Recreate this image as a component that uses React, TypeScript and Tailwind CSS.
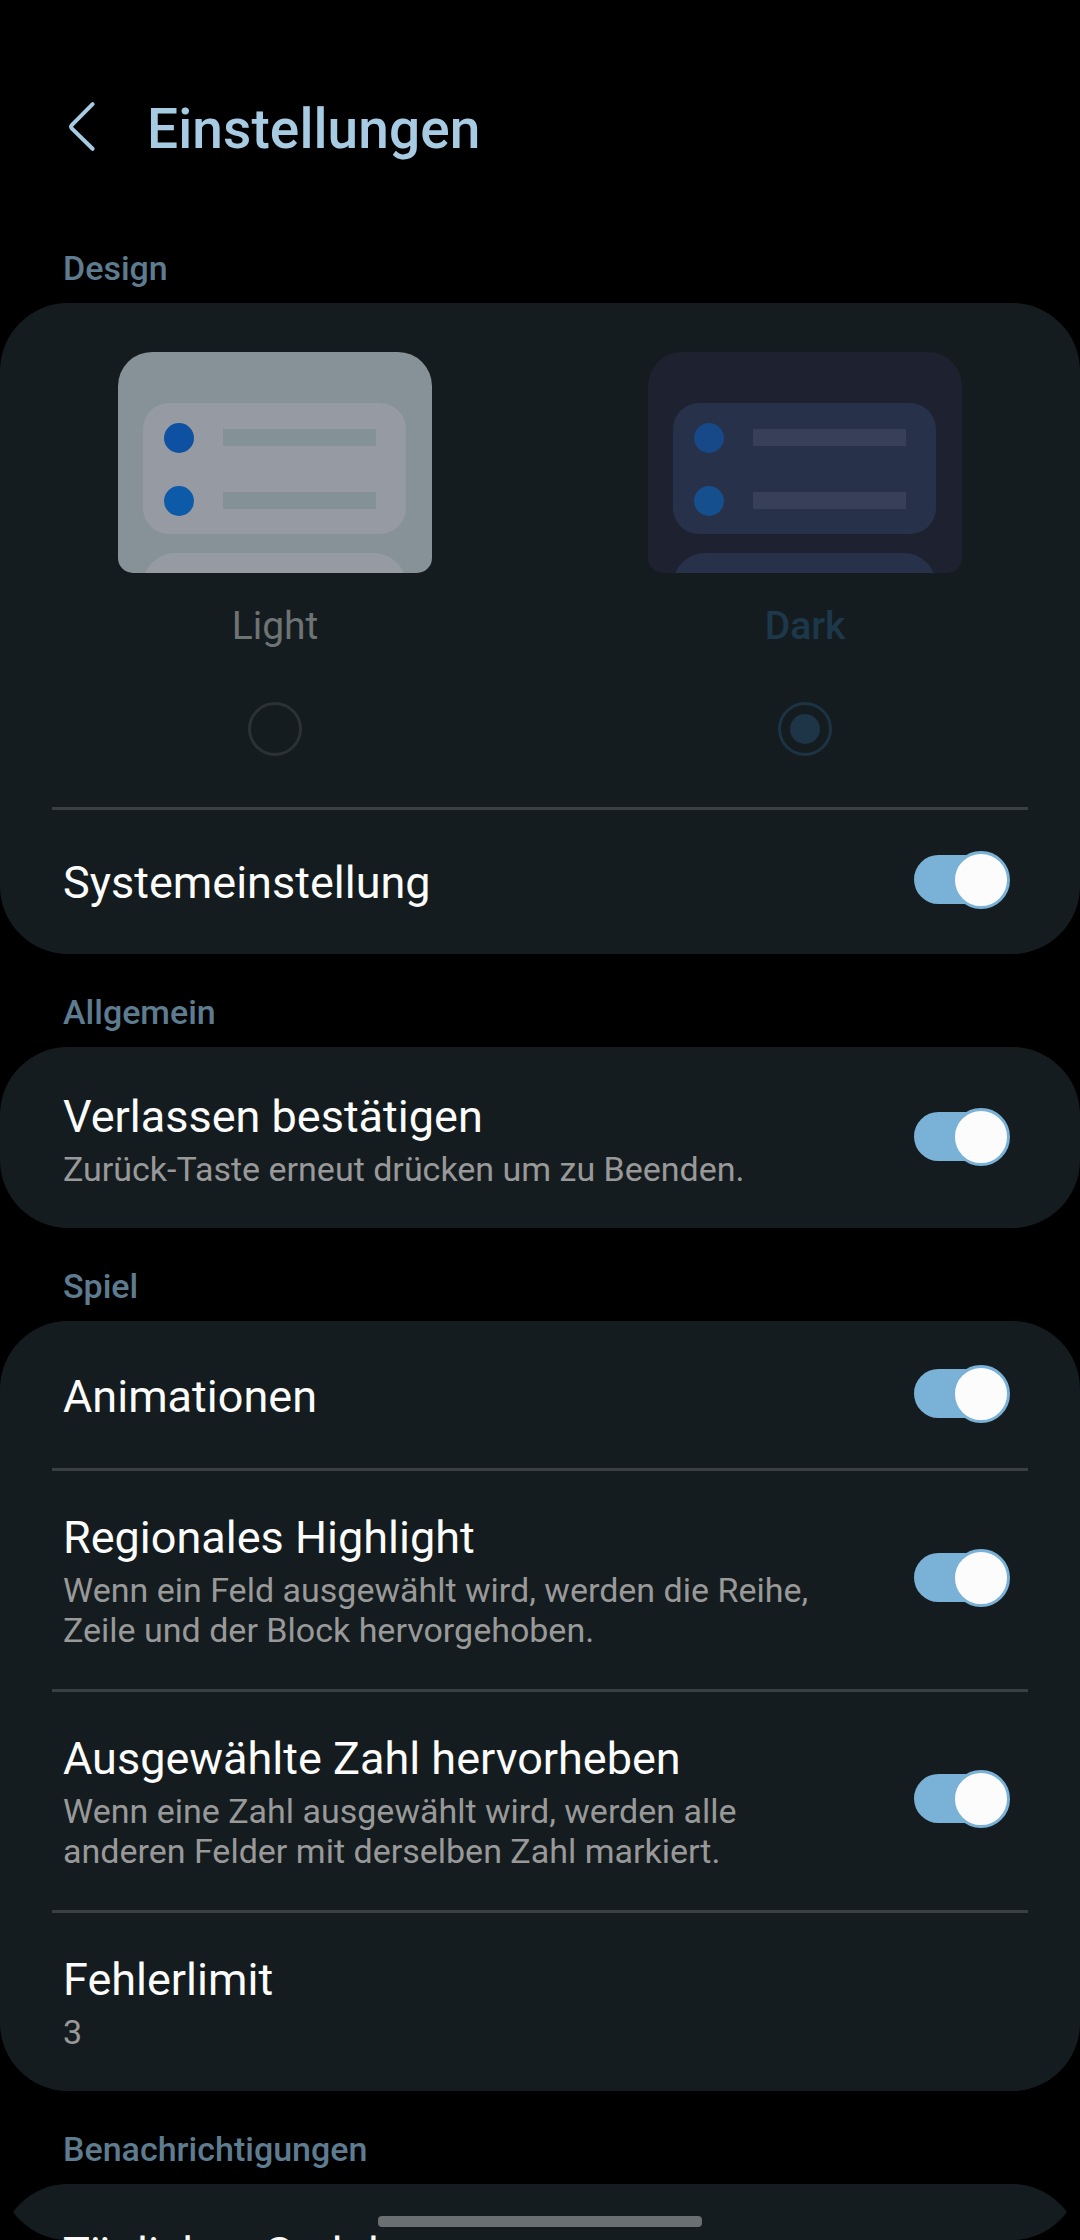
import type { ReactNode } from "react";

type PreviewColors = {
  frame: string;
  card: string;
  bar: string;
  dotTop: string;
  dotBottom: string;
};

const lightPreview: PreviewColors = {
  frame: "bg-[#869297]",
  card: "bg-[#969ba3]",
  bar: "bg-[#849196]",
  dotTop: "bg-[#0e50a1]",
  dotBottom: "bg-[#0c5aa8]",
};

const darkPreview: PreviewColors = {
  frame: "bg-[#1e2130]",
  card: "bg-[#27314a]",
  bar: "bg-[#384059]",
  dotTop: "bg-[#174888]",
  dotBottom: "bg-[#164f8d]",
};

function PreviewLine({ dot, bar }: { dot: string; bar: string }) {
  return (
    <div className="flex h-[31px] items-center gap-[29px]">
      <div className={`size-[30px] rounded-full ${dot}`} />
      <div className={`h-[17px] w-[153px] ${bar}`} />
    </div>
  );
}

function Preview({ colors }: { colors: PreviewColors }) {
  return (
    <div
      className={`flex h-[221px] w-[314px] flex-col overflow-hidden rounded-t-[34px] rounded-b-[15px] pt-[51px] pl-[25px] ${colors.frame}`}
    >
      <div className={`flex h-[131px] w-[263px] shrink-0 flex-col gap-[32px] rounded-[26px] pt-[19px] pl-[21px] ${colors.card}`}>
        <PreviewLine dot={colors.dotTop} bar={colors.bar} />
        <PreviewLine dot={colors.dotBottom} bar={colors.bar} />
      </div>
      <div className={`mt-[19px] h-[80px] w-[263px] shrink-0 rounded-[32px] ${colors.card}`} />
    </div>
  );
}

function ThemeOption({ label, colors, selected }: { label: string; colors: PreviewColors; selected?: boolean }) {
  return (
    <div className="flex flex-1 flex-col items-center">
      <Preview colors={colors} />
      <span
        className={`mt-[30px] text-[39px] leading-[46px] ${selected ? "font-medium text-[#1c384a]" : "text-[#6e7374]"}`}
      >
        {label}
      </span>
      <div
        className={`mt-[53px] flex size-[54px] items-center justify-center rounded-full border-[3px] ${selected ? "border-[#1c3344]" : "border-[#2b3134]"}`}
      >
        {selected && <div className="size-[30px] rounded-full bg-[#1d3546]" />}
      </div>
    </div>
  );
}

function Toggle() {
  return (
    <div className="mb-px flex h-[58px] w-[96px] shrink-0 items-start self-center">
      <div className="mt-[4px] h-[49px] w-[93px] rounded-full bg-[#7ab1d6]" />
      <div className="-ml-[55px] size-[58px] shrink-0 rounded-full border-[3px] border-[#7ab1d6] bg-[#fcfcfc]" />
    </div>
  );
}

function Row({
  title,
  subtitle,
  toggle,
  divider,
}: {
  title: string;
  subtitle?: string;
  toggle?: boolean;
  divider?: boolean;
}) {
  return (
    <div>
      {divider && <div className="mx-[52px] -mb-[3px] h-[3px] bg-[#3a3f42]" />}
      <div className="flex justify-between pr-[70px] pl-[63px]">
        <div className={subtitle ? "pt-[44px] pb-[39px]" : "pt-[50px] pb-[45px]"}>
          <div className="text-[45px] leading-[52px] text-[#fcfcfc]">{title}</div>
          {subtitle && (
            <div className="mt-[6px] text-[34px] leading-[40px] whitespace-pre-line text-[#999999]">{subtitle}</div>
          )}
        </div>
        {toggle && <Toggle />}
      </div>
    </div>
  );
}

function Section({ title, children }: { title: string; children: ReactNode }) {
  return (
    <section>
      <h2 className="h-[93px] pt-[38px] pl-[63px] text-[34px] leading-[40px] font-medium text-[#5e7c90]">{title}</h2>
      <div className="overflow-hidden rounded-[68px] bg-[#151c1f]">{children}</div>
    </section>
  );
}

export default function App() {
  return (
    <div className="relative h-[2240px] w-[1080px] overflow-hidden bg-black font-[Roboto,sans-serif]">
      <div className="h-[2240px] overflow-hidden rounded-b-[68px]">
        <header className="flex h-[210px] items-start pt-[97px] pl-[66px]">
          <svg className="mt-[3px] h-[54px] w-[32px]" viewBox="0 0 32 54" fill="none">
            <path
              d="M26.6 4.2 L6 24.8 Q4.2 26.6 6 28.6 L26.6 48.8"
              stroke="#a6cbe2"
              strokeWidth="4"
              strokeLinecap="round"
              strokeLinejoin="round"
            />
          </svg>
          <h1 className="ml-[49px] text-[55px] leading-[64px] font-medium tracking-[0.1px] text-[#a6cbe2]">
            Einstellungen
          </h1>
        </header>

        <Section title="Design">
          <div className="flex h-[504px] px-[10px] pt-[49px]">
            <ThemeOption label="Light" colors={lightPreview} />
            <ThemeOption label="Dark" colors={darkPreview} selected />
          </div>
          <Row title="Systemeinstellung" toggle divider />
        </Section>

        <Section title="Allgemein">
          <Row title="Verlassen bestätigen" subtitle="Zurück-Taste erneut drücken um zu Beenden." toggle />
        </Section>

        <Section title="Spiel">
          <Row title="Animationen" toggle />
          <Row
            title="Regionales Highlight"
            subtitle={"Wenn ein Feld ausgewählt wird, werden die Reihe,\nZeile und der Block hervorgehoben."}
            toggle
            divider
          />
          <Row
            title="Ausgewählte Zahl hervorheben"
            subtitle={"Wenn eine Zahl ausgewählt wird, werden alle\nanderen Felder mit derselben Zahl markiert."}
            toggle
            divider
          />
          <Row title="Fehlerlimit" subtitle="3" divider />
        </Section>

        <Section title="Benachrichtigungen">
          <Row title="Tägliches Sudoku" subtitle="Aus" />
        </Section>
      </div>

      <div className="absolute bottom-[13px] left-[378px] h-[11px] w-[324px] rounded-[4px] bg-[#6a6f71]" />
    </div>
  );
}
